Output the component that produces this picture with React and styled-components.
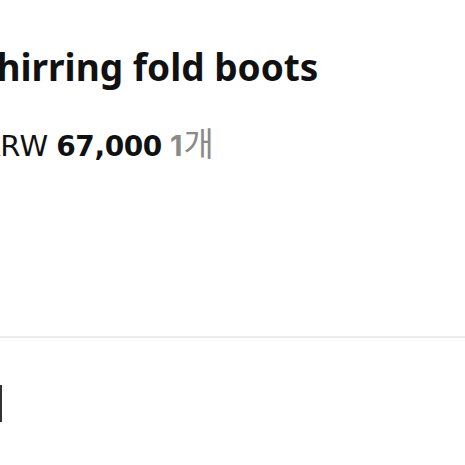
import React from "react";
import styled, { createGlobalStyle } from "styled-components";

const GlobalStyle = createGlobalStyle`
  body {
    margin: 0;
    background: #fff;
    font-family: 'Noto Sans', 'Noto Sans CJK KR', sans-serif;
    overflow: hidden;
  }
`;

const Page = styled.div`
  width: 465px;
  height: 465px;
  overflow: hidden;
  display: flex;
  flex-direction: column;
`;

const Info = styled.div`
  margin-left: -24px;
  padding-top: 39px;
  height: 336px;
  box-sizing: border-box;
`;

const Title = styled.h1`
  margin: 0;
  font-size: 37px;
  font-weight: 700;
  color: #111;
  line-height: 56px;
  white-space: nowrap;
`;

const PriceRow = styled.div`
  margin-top: 27px;
  margin-left: 5px;
  display: flex;
  align-items: baseline;
  gap: 8px;
  white-space: nowrap;
  line-height: 40px;
  color: #111;
`;

const Currency = styled.span`
  font-family: 'DejaVu Sans', sans-serif;
  font-size: 29px;
  letter-spacing: 0.2px;
`;

const Amount = styled.b`
  font-family: 'DejaVu Sans', sans-serif;
  font-size: 28px;
  font-weight: 700;
  letter-spacing: -0.4px;
`;

const Qty = styled.span`
  display: flex;
  align-items: baseline;
  gap: 1px;
  color: #8a8a8a;
`;

const QtyNum = styled.b`
  font-family: 'Inter', sans-serif;
  font-size: 29px;
  font-weight: 700;
`;

const QtyUnit = styled.span`
  font-family: 'Noto Sans CJK KR', sans-serif;
  font-size: 33px;
  font-weight: 400;
`;

const Divider = styled.hr`
  margin: 0;
  border: none;
  height: 2px;
  background: #ebebeb;
`;

const Option = styled.div`
  padding-top: 47px;
  display: flex;
`;

const Bar = styled.span`
  display: block;
  width: 2px;
  height: 37px;
  background: #333;
`;

export default function App() {
  return (
    <Page>
      <GlobalStyle />
      <Info>
        <Title>Shirring fold boots</Title>
        <PriceRow>
          <Currency>KRW</Currency>
          <Amount>67,000</Amount>
          <Qty>
            <QtyNum>1</QtyNum>
            <QtyUnit>개</QtyUnit>
          </Qty>
        </PriceRow>
      </Info>
      <Divider />
      <Option>
        <Bar />
      </Option>
    </Page>
  );
}
